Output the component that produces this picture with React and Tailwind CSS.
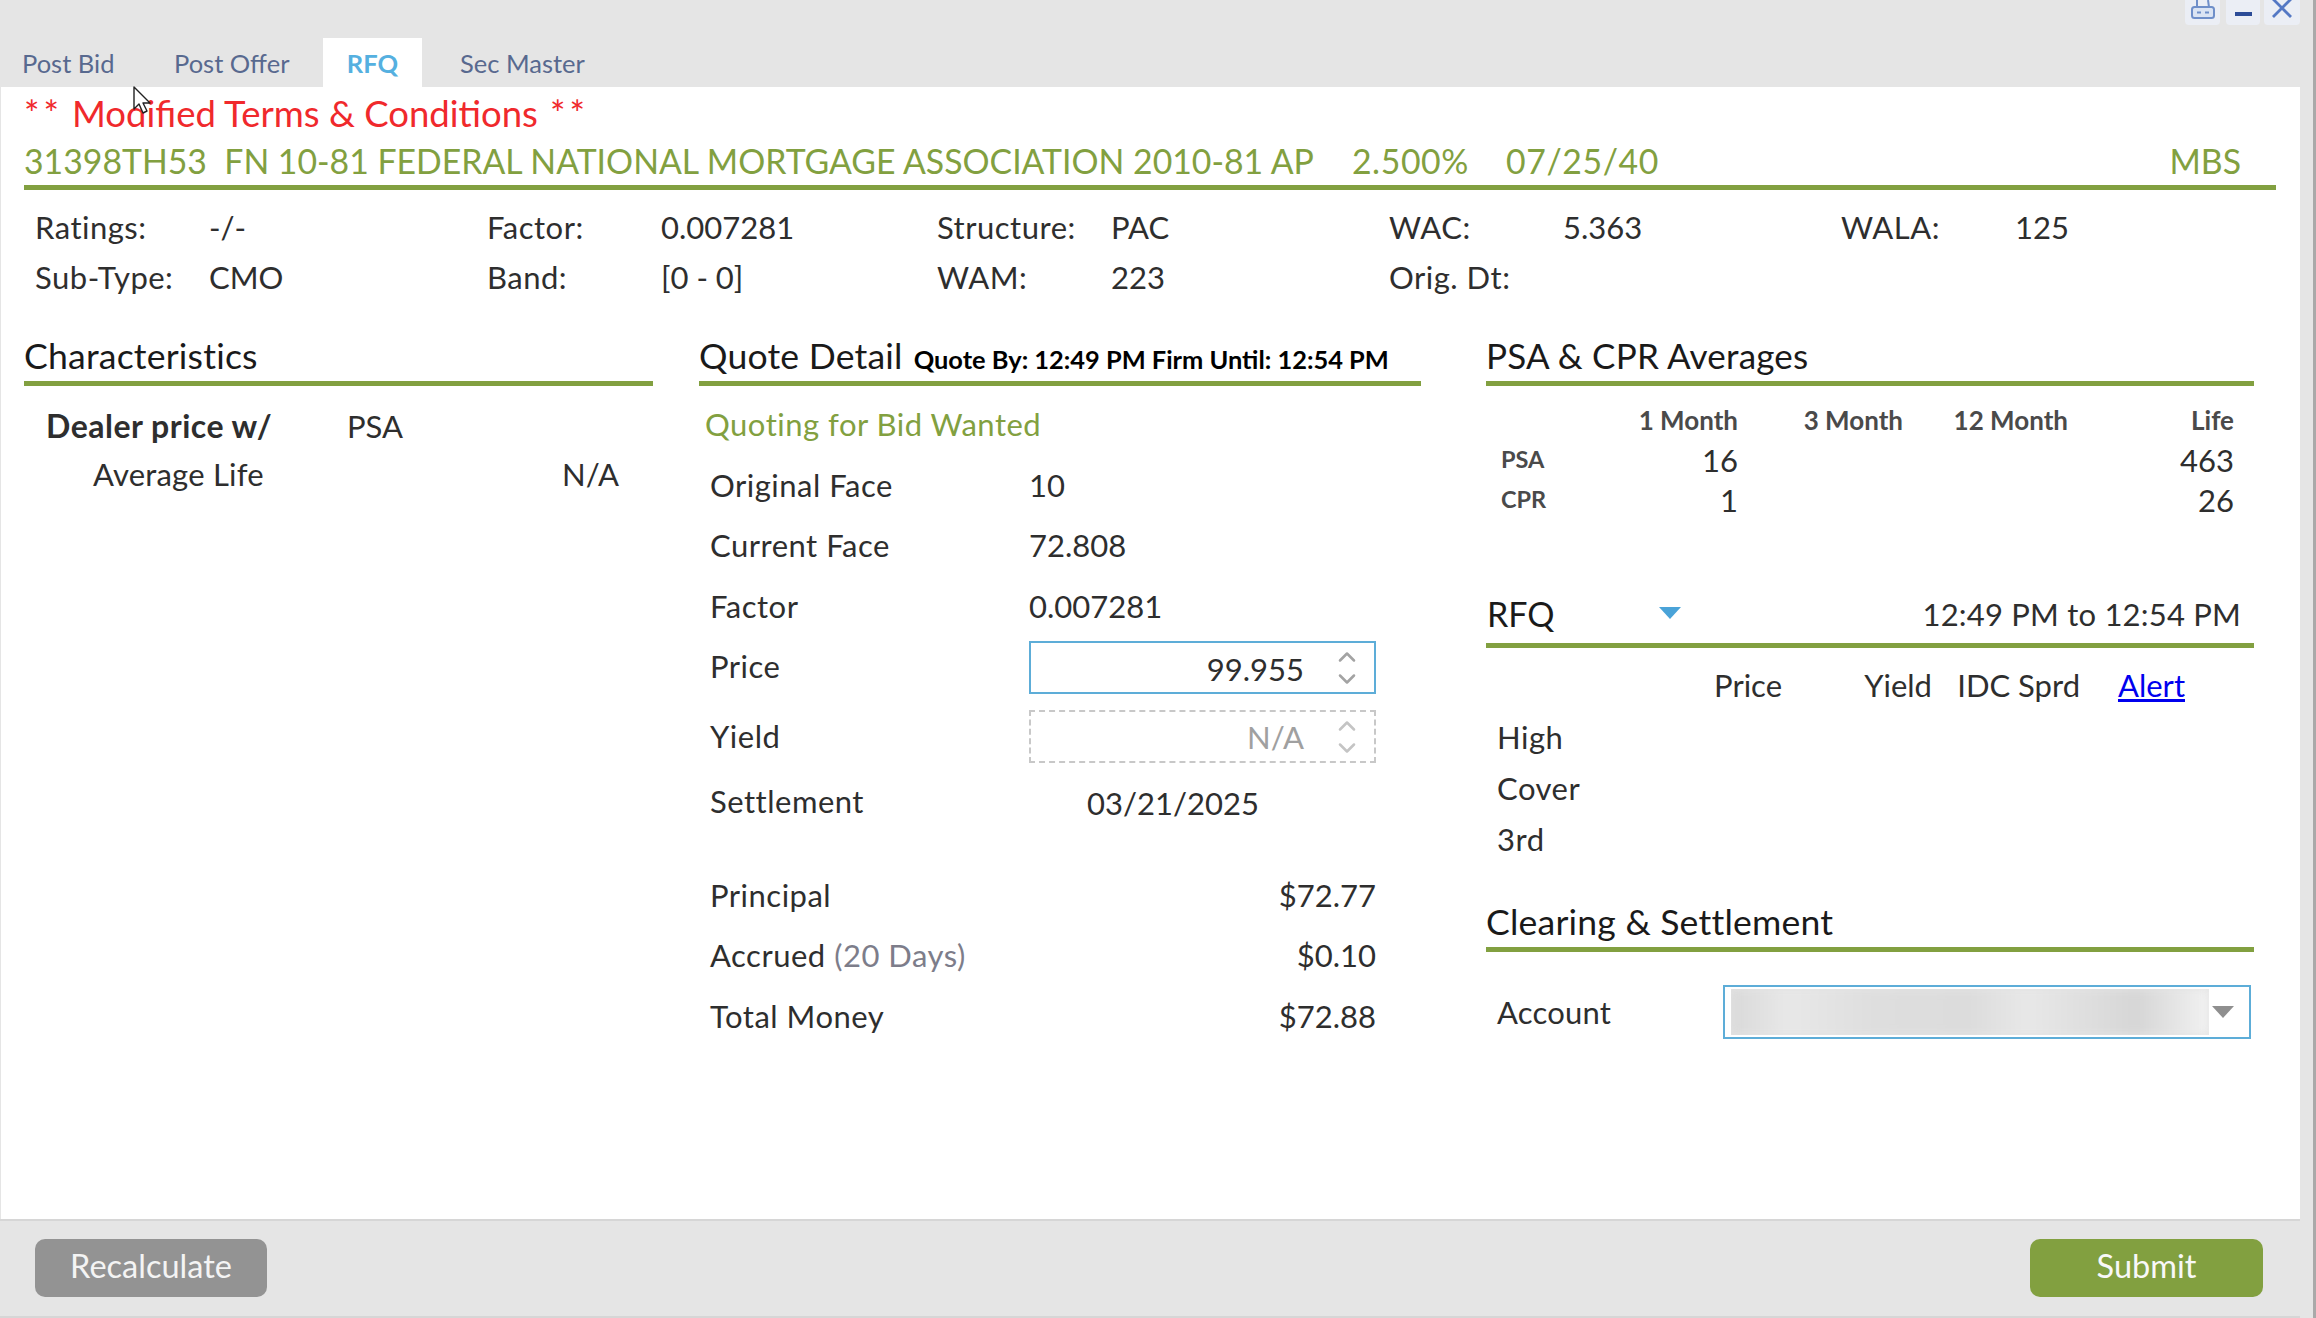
import { ChevronUp, ChevronDown } from 'lucide-react';

const tabs = [
    { label: 'Post Bid', cls: 'ml-[22px] w-[152px]' },
    { label: 'Post Offer', cls: 'w-[149px]' },
];

const infoRows = [
    [
        ['Ratings:', '-/-'],
        ['Factor:', '0.007281'],
        ['Structure:', 'PAC'],
        ['WAC:', '5.363'],
        ['WALA:', '125'],
    ],
    [
        ['Sub-Type:', 'CMO'],
        ['Band:', '[0 - 0]'],
        ['WAM:', '223'],
        ['Orig. Dt:', ''],
        ['', ''],
    ],
];

function SectionHead({ children, className = '' }) {
    return (
        <div className={`flex h-[54px] items-center border-b-[5px] border-[#82a040] pb-[2px] text-[35.6px] tracking-[0.2px] text-[#1a1a1a] ${className}`}>
            {children}
        </div>
    );
}

function Spinner({ muted }) {
    const color = muted ? 'text-[#c4c4c4]' : 'text-[#a3a3a3]';
    return (
        <div className={`flex w-[28px] flex-col items-center ${color}`}>
            <ChevronUp className="-mb-[3px] size-[28px]" strokeWidth={2.2} />
            <ChevronDown className="-mt-[3px] size-[28px]" strokeWidth={2.2} />
        </div>
    );
}

function QuoteRow({ label, value, className = '' }) {
    return (
        <div className={`flex items-center pl-[11px] ${className}`}>
            <div className="w-[319px]">{label}</div>
            <div className="tracking-normal">{value}</div>
        </div>
    );
}

function MoneyRow({ label, value, className = '' }) {
    return (
        <div className={`flex h-[60px] w-[677px] items-center justify-between pl-[11px] ${className}`}>
            <div>{label}</div>
            <div className="tracking-normal">{value}</div>
        </div>
    );
}

export default function App() {
    return (
        <div className="relative flex h-[1318px] w-[2316px] overflow-hidden bg-[#e5e5e5] font-[family-name:Lato,sans-serif] text-[31px] leading-none tracking-[0.5px] text-[#2e2e2e]">
            <div className="flex min-w-0 flex-1 flex-col">
                {/* top bar */}
                <div className="h-[87px]">
                    <div className="flex h-[25px] justify-end">
                        <div className="flex w-[35px] items-start justify-center rounded-b-[4px] bg-[#ebeef5]">
                            <svg viewBox="0 0 24 19" className="h-[19px] w-[24px]" fill="none" stroke="#6f8fc9" strokeWidth="2">
                                <path d="M6 0v7h12l-1-7" />
                                <rect x="1" y="7" width="22" height="11" rx="2.5" fill="#dbe4f3" />
                                <path d="M6 12.5h4M14 12.5h4" />
                            </svg>
                        </div>
                        <div className="ml-[6px] flex w-[34px] items-start justify-center rounded-b-[4px] bg-[#ebeef5] pt-[12px]">
                            <div className="h-[4px] w-[17px] bg-[#2c4c97]" />
                        </div>
                        <div className="ml-[4px] flex w-[36px] items-start justify-center rounded-b-[4px] bg-[#ebeef5]">
                            <svg viewBox="0 0 22 18" className="h-[18px] w-[22px]" fill="none" stroke="#5478c4" strokeWidth="2.8">
                                <path d="M2 -1l18 18M20 -1L2 17" />
                            </svg>
                        </div>
                    </div>
                    <div className="mt-[13px] flex h-[49px] items-center text-[25.5px] tracking-normal text-[#58698f]">
                        {tabs.map((t) => (
                            <div key={t.label} className={`pt-[2px] ${t.cls}`}>
                                {t.label}
                            </div>
                        ))}
                        <div className="flex h-full w-[99px] items-center justify-center bg-white pt-[2px] font-bold text-[#55b0e0]">RFQ</div>
                        <div className="ml-[38px] pt-[2px]">Sec Master</div>
                    </div>
                </div>

                {/* body */}
                <div className="ml-px flex-1 bg-white pl-[23px] pr-[24px] pt-[6px]">
                    <div className="flex h-[44px] items-center pb-[4px] text-[36.5px] tracking-normal text-[#f0292c]">
                        <span className="tracking-[4px]">**</span>
                        <span className="ml-[9px]">Modified Terms &amp; Conditions</span>
                        <span className="ml-[12px] tracking-[4px]">**</span>
                    </div>
                    <div className="flex h-[53px] items-center justify-between whitespace-pre border-b-[5px] border-[#82a040] pr-[35px] pt-[2px] text-[33.8px] tracking-normal text-[#82a040]">
                        <div className="flex">
                            <span>31398TH53  FN 10-81 FEDERAL NATIONAL MORTGAGE ASSOCIATION 2010-81 AP</span>
                            <span className="ml-[38px] tracking-[0.6px]">2.500%</span>
                            <span className="ml-[37px] tracking-[0.6px]">07/25/40</span>
                        </div>
                        <div>MBS</div>
                    </div>

                    <div className="mt-[12px] pl-[11px]">
                        {infoRows.map((row, i) => (
                            <div key={i} className="grid h-[50px] grid-cols-[452px_450px_452px_452px_1fr] items-center">
                                {row.map(([k, v], j) => (
                                    <div key={j} className="flex">
                                        <div className="w-[174px]">{k}</div>
                                        <div className="tracking-normal">{v}</div>
                                    </div>
                                ))}
                            </div>
                        ))}
                    </div>

                    <div className="mt-[30px] flex">
                        {/* characteristics */}
                        <div className="w-[629px]">
                            <SectionHead>Characteristics</SectionHead>
                            <div className="mt-[16px]">
                                <div className="flex h-[48px] items-center pl-[22px]">
                                    <div className="w-[301px] text-[32px] font-bold">Dealer price w/</div>
                                    <div className="tracking-normal">PSA</div>
                                </div>
                                <div className="flex h-[48px] items-center justify-between pl-[69px] pr-[34px]">
                                    <div className="tracking-[0.2px]">Average Life</div>
                                    <div className="tracking-normal">N/A</div>
                                </div>
                            </div>
                        </div>

                        {/* quote detail */}
                        <div className="ml-[46px] w-[722px]">
                            <SectionHead>
                                <span>Quote Detail</span>
                                <span className="ml-[11px] mt-[8px] text-[25.4px] font-bold tracking-normal text-black">Quote By: 12:49 PM Firm Until: 12:54 PM</span>
                            </SectionHead>
                            <div className="mt-[14px] flex h-[48px] items-center pl-[6px] tracking-[0.5px] text-[#82a040]">Quoting for Bid Wanted</div>
                            <div className="mt-[7px]">
                                <QuoteRow label="Original Face" value="10" className="h-[60px]" />
                                <QuoteRow label="Current Face" value="72.808" className="h-[60px]" />
                                <QuoteRow label="Factor" value="0.007281" className="mt-px h-[60px]" />
                                <div className="mt-[5px] flex h-[53px] items-center pl-[11px]">
                                    <div className="w-[319px] pb-[3px]">Price</div>
                                    <div className="flex h-full w-[347px] items-center justify-end border-2 border-[#5dadd8] pr-[13px] tracking-normal">
                                        <span className="mr-[29px] pt-[4px]">99.955</span>
                                        <Spinner />
                                    </div>
                                </div>
                                <div className="mt-[16px] flex h-[53px] items-center pl-[11px]">
                                    <div className="w-[319px]">Yield</div>
                                    <div className="flex h-full w-[347px] items-center justify-end border-2 border-dashed border-[#c8c8c8] pr-[13px] tracking-normal text-[#a0a0a0]">
                                        <span className="mr-[29px] pt-[2px]">N/A</span>
                                        <Spinner muted />
                                    </div>
                                </div>
                                <div className="mt-[14px] flex h-[52px] items-center pl-[11px]">
                                    <div className="w-[377px] pb-[3px]">Settlement</div>
                                    <div className="pt-[1px] tracking-normal">03/21/2025</div>
                                </div>
                                <MoneyRow label="Principal" value="$72.77" className="mt-[36px]" />
                                <MoneyRow
                                    label={
                                        <>
                                            Accrued <span className="text-[#7d7d8a]">(20 Days)</span>
                                        </>
                                    }
                                    value="$0.10"
                                />
                                <MoneyRow label="Total Money" value="$72.88" className="mt-px" />
                            </div>
                        </div>

                        {/* right column */}
                        <div className="ml-[65px] w-[768px]">
                            <SectionHead className="text-[35px]">PSA &amp; CPR Averages</SectionHead>
                            <div className="mt-[14px] grid grid-cols-[100px_137px_165px_165px_166px] pl-[15px] text-right tracking-normal">
                                <div className="h-[40px]" />
                                {['1 Month', '3 Month', '12 Month', 'Life'].map((h) => (
                                    <div key={h} className="flex h-[40px] items-center justify-end whitespace-nowrap text-[26px] font-bold text-[#4a4a4a]">
                                        {h}
                                    </div>
                                ))}
                                <div className="flex h-[40px] items-center text-[23.5px] font-bold text-[#4a4a4a]">PSA</div>
                                <div className="flex h-[40px] items-center justify-end">16</div>
                                <div />
                                <div />
                                <div className="flex h-[40px] items-center justify-end">463</div>
                                <div className="flex h-[40px] items-center text-[23.5px] font-bold text-[#4a4a4a]">CPR</div>
                                <div className="flex h-[40px] items-center justify-end">1</div>
                                <div />
                                <div />
                                <div className="flex h-[40px] items-center justify-end">26</div>
                            </div>

                            <div className="mt-[70px] flex h-[58px] items-center justify-between border-b-[5px] border-[#82a040] pb-[5px] pl-px pr-[13px]">
                                <div className="flex items-center">
                                    <span className="w-[172px] text-[34px] tracking-normal text-[#1a1a1a]">RFQ</span>
                                    <svg viewBox="0 0 22 12" className="-mt-[2px] h-[12px] w-[22px]">
                                        <path d="M0 0h22L11 12z" fill="#4aa3d8" />
                                    </svg>
                                </div>
                                <div className="tracking-[0.2px]">12:49 PM to 12:54 PM</div>
                            </div>

                            <div className="mt-[12px] pl-[11px]">
                                <div className="grid h-[50px] grid-cols-[285px_150px_148px_105px] items-center whitespace-nowrap text-right tracking-normal">
                                    <div>Price</div>
                                    <div>Yield</div>
                                    <div>IDC Sprd</div>
                                    <div className="text-[#0000ee] underline">Alert</div>
                                </div>
                                <div className="mt-[2px] flex h-[51px] items-center">High</div>
                                <div className="flex h-[51px] items-center">Cover</div>
                                <div className="flex h-[51px] items-center">3rd</div>
                            </div>

                            <SectionHead className="mt-[33px]">Clearing &amp; Settlement</SectionHead>
                            <div className="mt-[33px] flex h-[54px] items-center pl-[11px]">
                                <div className="w-[226px] tracking-[0.2px]">Account</div>
                                <div className="flex h-full w-[528px] items-center border-2 border-[#5dadd8] pl-[6px]">
                                    <div className="h-[46px] w-[478px] overflow-hidden bg-[#e4e4e4]">
                                        <div className="h-full w-full bg-[linear-gradient(90deg,#d9d9d9_0%,#e8e8e8_12%,#dedede_30%,#dcdcdc_50%,#e8e8e8_62%,#d6d6d6_85%,#f2f2f2_100%)] blur-[4px]" />
                                    </div>
                                    <svg viewBox="0 0 22 12" className="ml-[3px] h-[12px] w-[22px]">
                                        <path d="M0 0h22L11 12z" fill="#8f8f8f" />
                                    </svg>
                                </div>
                            </div>
                        </div>
                    </div>
                </div>

                {/* footer */}
                <div className="flex h-[99px] items-start justify-between border-y-2 border-[#d6d6d6] pl-[35px] pr-[37px] pt-[18px]">
                    <button className="h-[58px] w-[232px] rounded-[10px] bg-[#939393] pb-[3px] text-[32.5px] tracking-normal text-[#f4f4f4]">Recalculate</button>
                    <button className="h-[58px] w-[233px] rounded-[10px] bg-[#82a040] pb-[3px] text-[32.5px] tracking-normal text-[#f8f8f8]">Submit</button>
                </div>
            </div>
            <div className="w-[16px] shrink-0 border-r-[3px] border-[#a9a9a9] bg-[#e5e5e5]" />

            {/* mouse pointer */}
            <svg viewBox="0 0 19 29" className="absolute left-[133px] top-[86px] h-[29px] w-[19px]">
                <path d="M1 1v22l5-5 4 9 4-2-4-8h7z" fill="#fff" stroke="#222" strokeWidth="1.4" strokeLinejoin="round" />
            </svg>
        </div>
    );
}
